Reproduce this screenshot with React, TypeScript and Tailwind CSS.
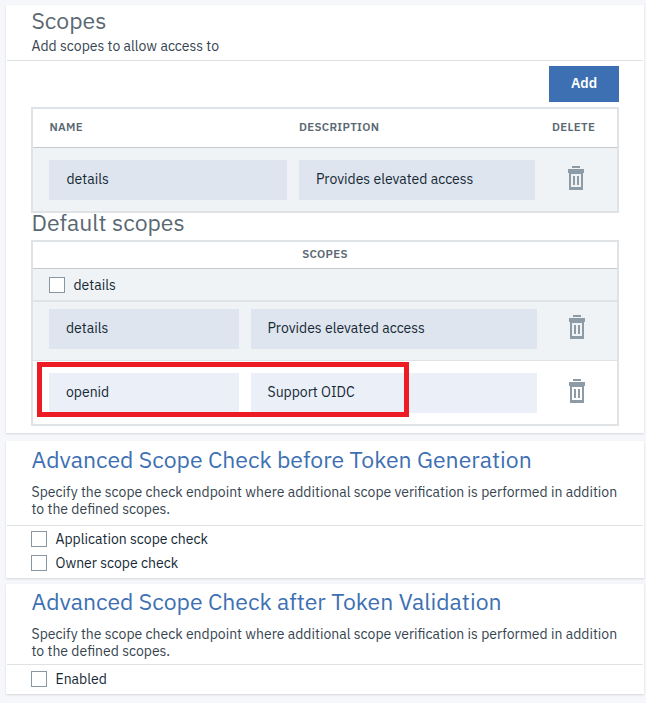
import React from "react";

function Trash() {
  return (
    <svg width="16" height="24" viewBox="0 0 16 24" shapeRendering="crispEdges" className="block shrink-0 text-[#8c9ba6]" fill="currentColor">
      <path d="M4 0h8v2H4z" />
      <path fillRule="evenodd" d="M0 3h16v4h-1v17H1V7H0zM3 8v13h10V8z" />
      <path d="M5 10h2v9H5zM9 10h2v9H9z" />
    </svg>
  );
}

function Check({ label, className = "" }: { label: string; className?: string }) {
  return (
    <label className={`flex h-4 items-center text-sm leading-4 text-[#152935] ${className}`}>
      <span className="mr-[8.5px] block h-4 w-4 shrink-0 border border-[#8897a2] bg-white" />
      <span>{label}</span>
    </label>
  );
}

function Field({ value, className }: { value: string; className: string }) {
  return <div className={`flex h-10 shrink-0 items-center pb-0.5 text-sm text-[#152935] ${className}`}>{value}</div>;
}

function Card({ className, children }: { className: string; children: React.ReactNode }) {
  return <section className={`w-[638px] bg-white px-px shadow-[0_1px_2px_rgba(0,0,0,0.13)] ${className}`}>{children}</section>;
}

function AdvancedHeader({ title, className }: { title: string; className: string }) {
  return (
    <header className={`border-b border-[#dfe1e4] pl-[24.5px] ${className}`}>
      <h2 className="text-[23px] leading-8 whitespace-nowrap text-[#3d70b2]">{title}</h2>
      <p className="pt-[9px] text-sm leading-[17px] whitespace-nowrap text-[#36454f]">
        Specify the scope check endpoint where additional scope verification is performed in addition
        <br />
        to the defined scopes.
      </p>
    </header>
  );
}

export default function App() {
  return (
    <div className="h-[703px] w-[651px] overflow-hidden bg-white font-['IBM_Plex_Sans',Roboto,sans-serif]">
      <main className="h-full w-[646px] bg-[#f5f7fb] pt-[5px] pl-1.5">
        <Card className="h-[428px]">
          <header className="h-14 border-b border-[#dfe1e4] pl-[24.5px]">
            <h1 className="h-8 text-[23px] leading-[30px] text-[#5a6872]">Scopes</h1>
            <p className="text-sm leading-[18px] text-[#36454f]">Add scopes to allow access to</p>
          </header>
          <div className="w-[612px] pl-6">
            <div className="flex justify-end pt-[5px]">
              <button className="h-9 w-[70px] bg-[#3d70b2] pb-0.5 text-sm font-semibold text-white">Add</button>
            </div>
            <div className="mt-[5px] h-[106px] border-2 border-[#dfe3e6]">
              <div className="flex h-[39px] items-center border-b border-[#c4c9cd] pb-0.5 pl-[16.5px] text-[11.5px] font-semibold tracking-[0.3px] text-[#5a6872]">
                <span className="w-[249.5px]">NAME</span>
                <span className="w-[253px]">DESCRIPTION</span>
                <span>DELETE</span>
              </div>
              <div className="flex h-[63px] items-start bg-[#eff3f6] pt-3 pl-4">
                <Field value="details" className="w-[238px] bg-[#dfe5ef] pl-[17.5px]" />
                <Field value="Provides elevated access" className="ml-3 w-[236px] bg-[#dfe5ef] pl-[17px]" />
                <div className="mt-1.5 ml-[33px]"><Trash /></div>
              </div>
            </div>
            <h2 className="h-[27px] pl-[0.5px] text-[23px] leading-[19px] text-[#5a6872]">Default scopes</h2>
            <div className="relative h-[186px] border-2 border-[#dfe3e6]">
              <div className="h-[27px] border-b border-[#c4c9cd] text-center text-[11.5px] leading-[23px] font-semibold tracking-[0.3px] text-[#5a6872]">SCOPES</div>
              <div className="h-[33px] border-b-2 border-[#dfe3e6] bg-[#eff3f6] pt-2 pl-4">
                <Check label="details" />
              </div>
              <div className="flex h-[59px] items-start border-b border-[#dfe3e6] bg-[#eff3f6] pt-[7px] pl-4">
                <Field value="details" className="w-[190px] bg-[#dfe5ef] pl-[17px]" />
                <Field value="Provides elevated access" className="ml-3 w-[286px] bg-[#dfe5ef] pl-[16.5px]" />
                <div className="mt-1.5 ml-8"><Trash /></div>
              </div>
              <div className="flex h-[63px] items-start pt-3 pl-4">
                <Field value="openid" className="w-[190px] bg-[#ebeff7] pl-[17px]" />
                <Field value="Support OIDC" className="ml-3 w-[286px] bg-[#ebeff7] pl-[16.5px]" />
                <div className="mt-1.5 ml-8"><Trash /></div>
              </div>
              <div className="pointer-events-none absolute top-[120px] left-1 h-[55px] w-[372px] border-5 border-[#ed1c24]" />
            </div>
          </div>
        </Card>

        <Card className="mt-2 h-[137px]">
          <AdvancedHeader title="Advanced Scope Check before Token Generation" className="h-[85px] pt-0.5" />
          <div className="flex flex-col gap-2 pt-[5px] pl-6">
            <Check label="Application scope check" />
            <Check label="Owner scope check" />
          </div>
        </Card>

        <Card className="mt-1.5 h-[110px]">
          <AdvancedHeader title="Advanced Scope Check after Token Validation" className="h-[81px] pt-px" />
          <div className="pt-1.5 pl-6">
            <Check label="Enabled" />
          </div>
        </Card>
      </main>
    </div>
  );
}
